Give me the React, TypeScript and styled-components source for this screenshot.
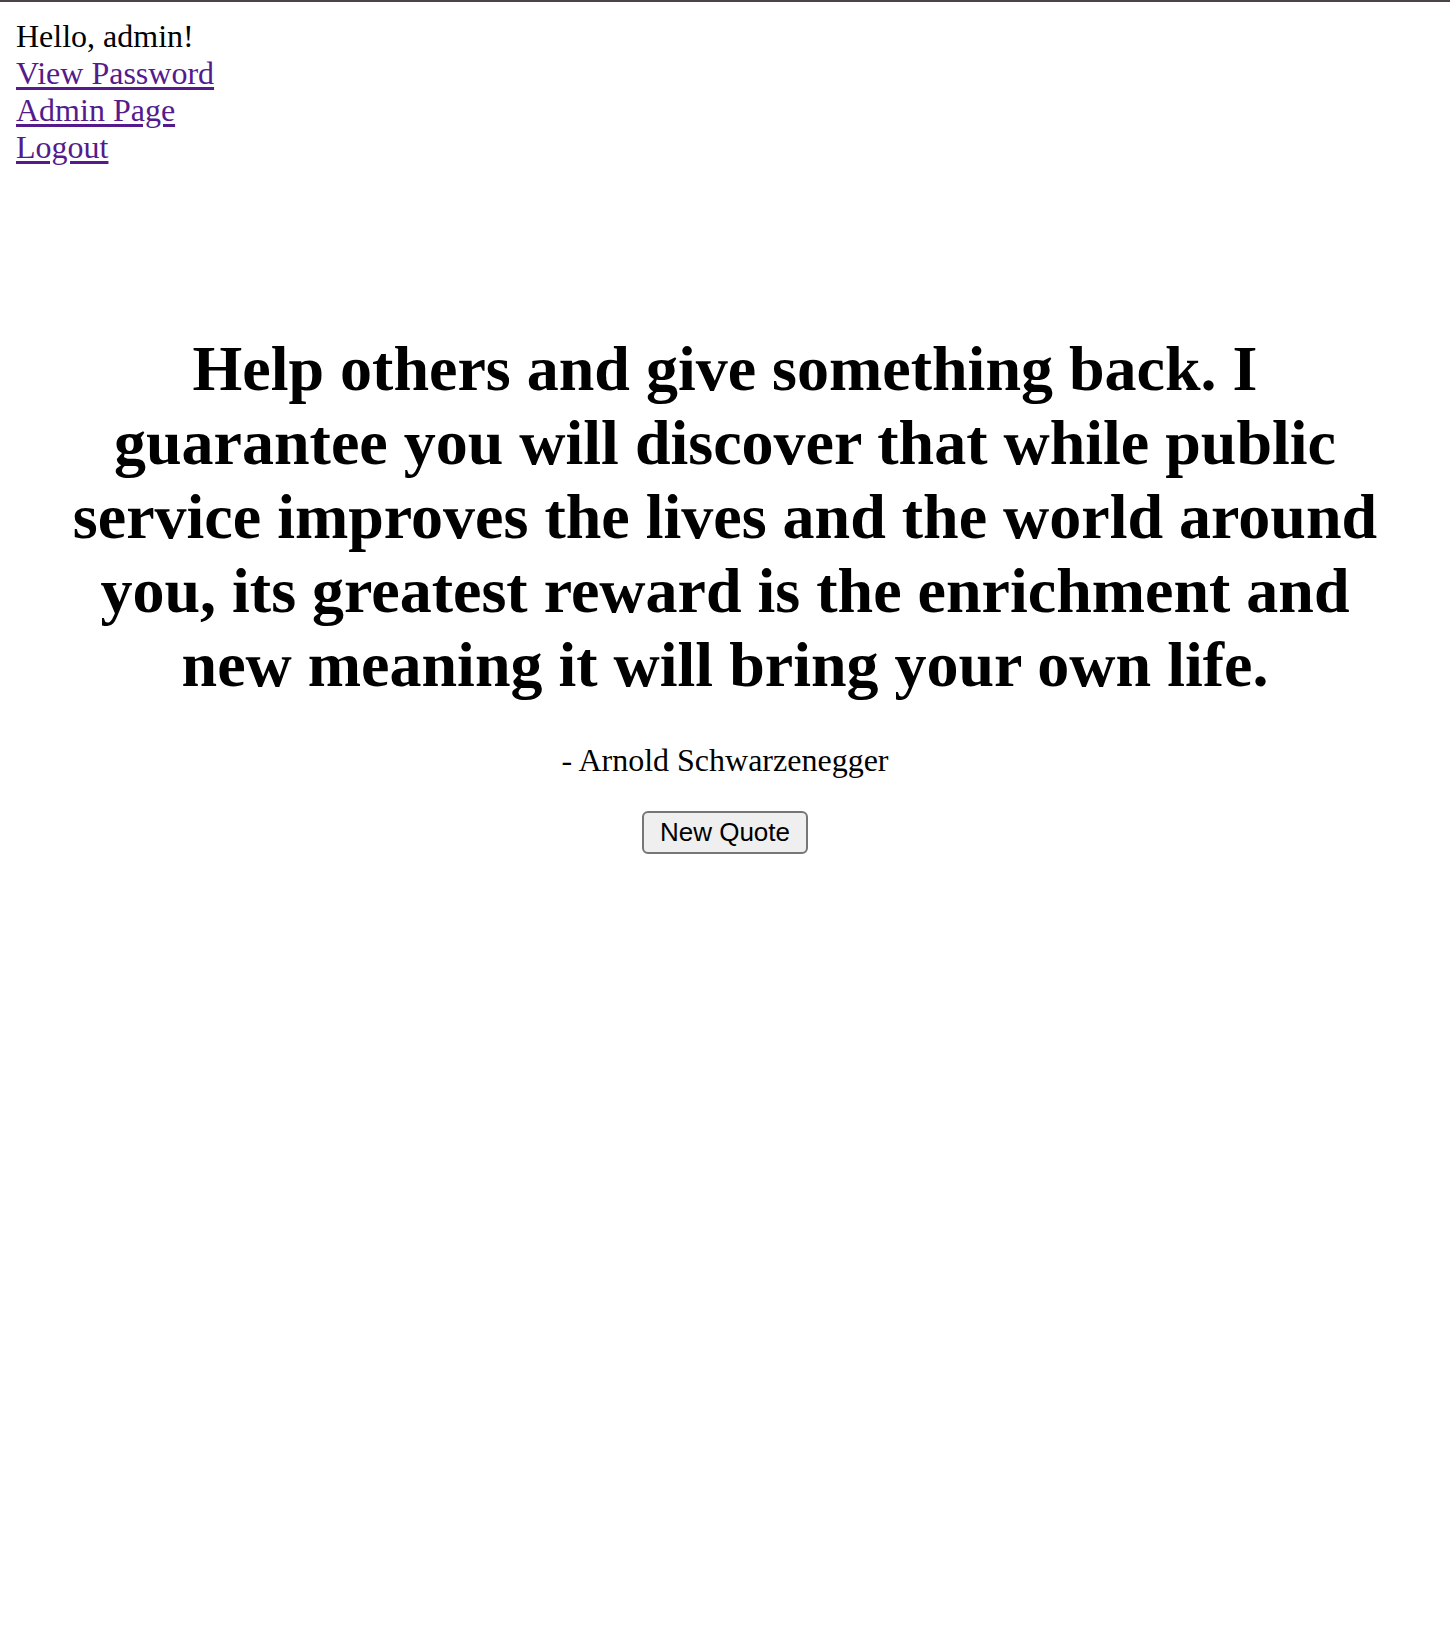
import styled, {createGlobalStyle} from "styled-components";

const GlobalStyle = createGlobalStyle`
    html, body {
        margin: 0;
        padding: 0;
        background: #fff;
    }
    body {
        border-top: 2px solid #4a444a;
        font-family: "Liberation Serif", "Times New Roman", serif;
        font-size: 32px;
        color: #000;
    }
`;

const Page = styled.div`
    padding: 16px 16px 16px;
`;

const UserNav = styled.nav`
    display: flex;
    flex-direction: column;
    align-items: flex-start;
    line-height: 37px;
`;

const NavLink = styled.a`
    color: #551a8b;
    text-decoration: underline;
    text-underline-offset: 3px;
`;

const QuoteBox = styled.main`
    display: flex;
    flex-direction: column;
    align-items: center;
    text-align: center;
    padding: 124px 56px 0;
`;

const QuoteText = styled.h1`
    margin: 42px 0 0;
    font-size: 64px;
    font-weight: bold;
    line-height: 74px;
`;

const Author = styled.p`
    margin: 40px 0 0;
    line-height: 37px;
`;

const NewQuoteButton = styled.button`
    margin-top: 32px;
    font-family: "Liberation Sans", Arial, sans-serif;
    font-size: 26px;
    padding: 3px 16px;
    height: 43px;
    color: #000;
    background: #efefef;
    border: 2px solid #767676;
    border-radius: 6px;
`;

export default function App() {
    return (
        <>
            <GlobalStyle/>
            <Page>
                <UserNav>
                    <span>Hello, admin!</span>
                    <NavLink href="#">View Password</NavLink>
                    <NavLink href="#">Admin Page</NavLink>
                    <NavLink href="#">Logout</NavLink>
                </UserNav>
                <QuoteBox>
                    <QuoteText>
                        Help others and give something back. I guarantee you will discover that while public service improves the lives and the world around you, its greatest reward is the enrichment and new meaning it will bring your own life.
                    </QuoteText>
                    <Author>- Arnold Schwarzenegger</Author>
                    <NewQuoteButton>New Quote</NewQuoteButton>
                </QuoteBox>
            </Page>
        </>
    );
}
